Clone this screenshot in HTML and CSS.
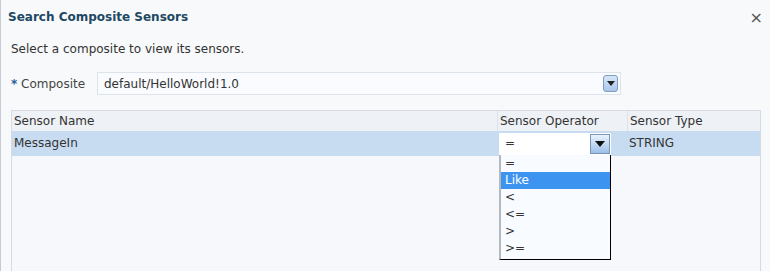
FILE: index.html
```html
<!DOCTYPE html>
<html lang="en">
<head>
    <meta charset="UTF-8">
    <title>Search Composite Sensors</title>
    <link rel="stylesheet" href="styles.css">
</head>
<body>
<div class="dialog">
    <div class="dialog-header">
        <h1 class="dialog-title">Search Composite Sensors</h1>
        <span class="close">&times;</span>
    </div>
    <p class="hint">Select a composite to view its sensors.</p>

    <div class="field-row">
        <label class="field-label"><span class="req">*</span> Composite</label>
        <div class="select composite-select">
            <span class="select-value">default/HelloWorld!1.0</span>
            <span class="select-btn round">
                <svg width="8" height="5" viewBox="0 0 8 5"><path d="M0 0h8L4 5z" fill="#222"/></svg>
            </span>
        </div>
    </div>

    <!-- Sensors table -->
    <div class="sensor-table">
        <div class="row head">
            <div class="cell">Sensor Name</div>
            <div class="cell">Sensor Operator</div>
            <div class="cell">Sensor Type</div>
        </div>
        <div class="row selected">
            <div class="cell">MessageIn</div>
            <div class="cell op-cell">
                <div class="select op-select">
                    <span class="select-value">=</span>
                    <span class="select-btn square">
                        <svg width="10" height="6" viewBox="0 0 10 6"><path d="M0 0h10L5 6z" fill="#111"/></svg>
                    </span>
                </div>
                <ul class="op-list">
                    <li>=</li>
                    <li class="active">Like</li>
                    <li>&lt;</li>
                    <li>&lt;=</li>
                    <li>&gt;</li>
                    <li>&gt;=</li>
                </ul>
            </div>
            <div class="cell">STRING</div>
        </div>
    </div>
</div>
</body>
</html>
```

FILE: styles.css
```css
body {
    margin: 0;
    font-family: "DejaVu Sans", Verdana, sans-serif;
    font-size: 11px;
    color: #333;
    background-color: #f8f9fa;
}

.dialog {
    height: 271px;
    border-left: 1px solid #c5cad3;
    padding: 0 10px 0 10px;
    box-sizing: border-box;
    overflow: hidden;
}

.dialog-header {
    display: flex;
    justify-content: space-between;
    align-items: center;
    height: 34px;
    margin-left: -3px;
}

.dialog-title {
    margin: 0;
    font-size: 12px;
    font-weight: bold;
    color: #1d4863;
}

.close {
    font-size: 16px;
    color: #555;
    margin-right: -3px;
}

.hint {
    margin: 0;
    height: 28px;
    line-height: 30px;
    font-size: 12px;
}

.field-row {
    display: flex;
    align-items: center;
    margin-top: 10px;
    height: 23px;
}

.field-label {
    width: 86px;
    font-size: 12px;
    color: #444;
}

.req {
    color: #1e5fa0;
    font-weight: bold;
}

.select {
    display: flex;
    align-items: center;
    justify-content: space-between;
    background-color: #f9fbfe;
    border: 1px solid #dde3ea;
    box-sizing: border-box;
}

.composite-select {
    width: 524px;
    height: 23px;
    padding: 0 2px 0 6px;
    font-size: 12px;
}

.select-btn {
    display: flex;
    align-items: center;
    justify-content: center;
}

.select-btn.round {
    width: 15px;
    height: 17px;
    border: 1px solid #7f9bbd;
    border-radius: 3px;
    background: linear-gradient(#d8e7f8, #a9c8ec);
    box-sizing: border-box;
}

.sensor-table {
    margin-top: 15px;
    width: 750px;
    height: 170px;
    border: 1px solid #d6dbe3;
    border-bottom: none;
    background-color: #f7f8fc;
    box-sizing: border-box;
}

.row {
    display: grid;
    grid-template-columns: 485px 130px 1fr;
}

.row.head {
    height: 20px;
    background-color: #eef1f6;
}

.row.head .cell {
    line-height: 20px;
    border-left: 1px solid #dde2ea;
}

.row.head .cell:first-child {
    border-left: none;
}

.row.selected {
    height: 25px;
    background-color: #c8dcf1;
}

.cell {
    padding-left: 2px;
    font-size: 12px;
    line-height: 25px;
    white-space: nowrap;
}

.op-cell {
    position: relative;
    padding-left: 2px;
    display: flex;
    align-items: center;
}

.op-select {
    width: 112px;
    height: 22px;
    padding: 0 1px 0 6px;
    background-color: #fff;
    border: none;
}

.select-btn.square {
    width: 20px;
    height: 20px;
    border: 1px solid #7c95b2;
    background: linear-gradient(#eaf3fd, #9cc0ea);
    box-sizing: border-box;
}

.op-list {
    position: absolute;
    left: 2px;
    top: 24px;
    width: 112px;
    margin: 0;
    padding: 0 0 2px 0;
    list-style: none;
    background-color: #f8fbff;
    border: 1px solid #000;
    border-left: 2px solid #b4b8bf;
    border-top: none;
    box-sizing: border-box;
}

.op-list li {
    height: 17px;
    line-height: 17px;
    padding-left: 4px;
    font-size: 12px;
}

.op-list li.active {
    background-color: #3c94f0;
    color: #fff;
}
```
